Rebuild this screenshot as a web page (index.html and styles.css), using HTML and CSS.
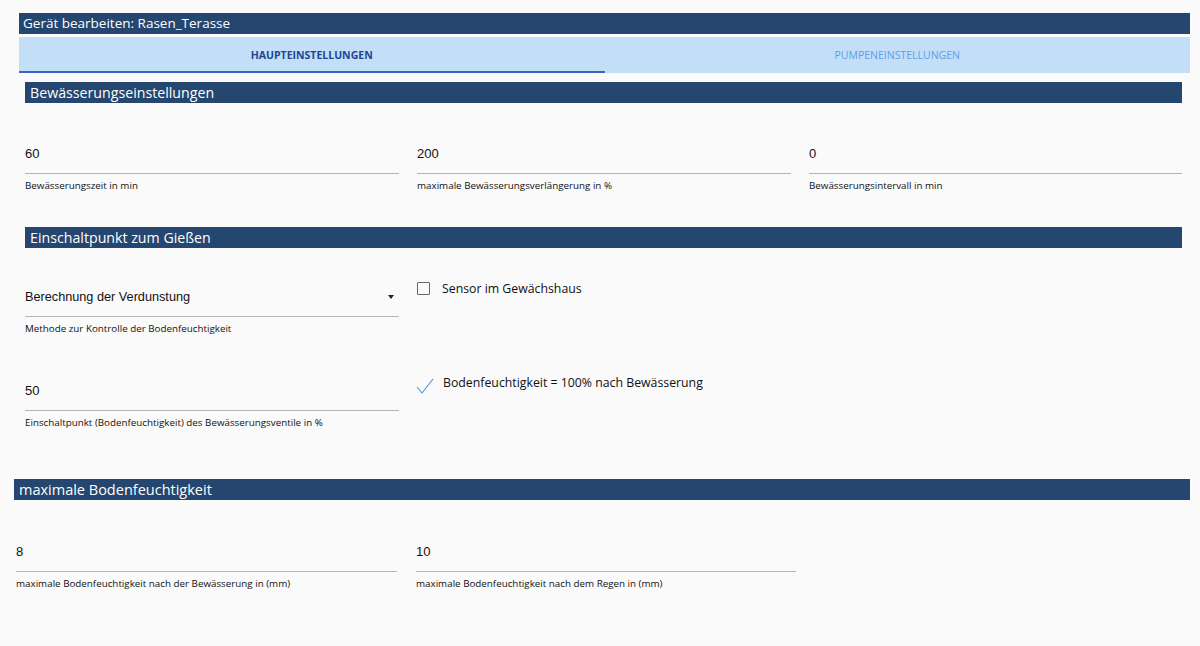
FILE: index.html
```html
<!DOCTYPE html>
<html lang="de">
<head>
  <meta charset="UTF-8">
  <title>Gerät bearbeiten</title>
  <link rel="stylesheet" href="styles.css">
</head>
<body>
  <div class="dialog">
    <div class="dialog-title">Gerät bearbeiten: Rasen_Terasse</div>
    <div class="tabs">
      <div class="tab active">HAUPTEINSTELLUNGEN</div>
      <div class="tab">PUMPENEINSTELLUNGEN</div>
    </div>

    <div class="section">
      <h2 class="section-head">Bewässerungseinstellungen</h2>
      <div class="grid first-row">
        <div class="field">
          <div class="input">60</div>
          <div class="label">Bewässerungszeit in min</div>
        </div>
        <div class="field">
          <div class="input">200</div>
          <div class="label">maximale Bewässerungsverlängerung in %</div>
        </div>
        <div class="field">
          <div class="input">0</div>
          <div class="label">Bewässerungsintervall in min</div>
        </div>
      </div>

      <h2 class="section-head head-gap">Einschaltpunkt zum Gießen</h2>
      <div class="grid first-row tight">
        <div class="field">
          <div class="input select">
            <span>Berechnung der Verdunstung</span>
            <span class="caret"></span>
          </div>
          <div class="label">Methode zur Kontrolle der Bodenfeuchtigkeit</div>
        </div>
        <label class="check">
          <span class="box"></span>
          <span>Sensor im Gewächshaus</span>
        </label>
        <div></div>
        <div class="field second">
          <div class="input">50</div>
          <div class="label">Einschaltpunkt (Bodenfeuchtigkeit) des Bewässerungsventile in %</div>
        </div>
        <label class="check second checked">
          <svg class="tick" width="18" height="16" viewBox="0 0 18 16">
            <path d="M1 9 L6 15 L17 1" fill="none" stroke="#4a90e2" stroke-width="1.1"/>
          </svg>
          <span>Bodenfeuchtigkeit = 100% nach Bewässerung</span>
        </label>
      </div>
    </div>

    <div class="section wide">
      <h2 class="section-head">maximale Bodenfeuchtigkeit</h2>
      <div class="grid two first-row">
        <div class="field">
          <div class="input">8</div>
          <div class="label">maximale Bodenfeuchtigkeit nach der Bewässerung in (mm)</div>
        </div>
        <div class="field">
          <div class="input">10</div>
          <div class="label">maximale Bodenfeuchtigkeit nach dem Regen in (mm)</div>
        </div>
      </div>
    </div>
  </div>
</body>
</html>
```

FILE: styles.css
```css
body {
  margin: 0;
  background: #fafafa;
  color: #111;
  font-family: "Open Sans", "DejaVu Sans", sans-serif;
}
.dialog {
  width: 1171px;
  margin: 13px 0 0 19px;
}
.dialog-title {
  background: #24466f;
  color: #fff;
  height: 21px;
  line-height: 21px;
  padding-left: 4px;
  font-size: 13.5px;
}
.tabs {
  display: flex;
  margin-top: 3px;
  height: 36px;
  background: #c3def7;
}
.tab {
  flex: 1;
  text-align: center;
  line-height: 36px;
  font-size: 10.5px;
  color: #5aa0ea;
  border-bottom: 2px solid transparent;
  box-sizing: border-box;
}
.tab.active {
  color: #1f4592;
  font-weight: bold;
  border-bottom-color: #3a63c4;
}
.section {
  padding: 0 8px 0 6px;
}
.section.wide {
  padding: 0;
  margin-left: -5px;
}
.section-head {
  margin: 9px 0 0;
  background: #24466f;
  color: #fff;
  font-weight: normal;
  font-size: 14.2px;
  height: 21px;
  line-height: 21px;
  padding-left: 5px;
}
.section.wide .section-head {
  margin-top: 50px;
  font-size: 14.5px;
}
.head-gap {
  margin-top: 35px;
}
.grid {
  display: grid;
  grid-template-columns: 374px 374px 373px;
  column-gap: 18px;
  align-items: start;
}
.grid.two {
  grid-template-columns: 381px 380px;
  column-gap: 19px;
  padding-left: 2px;
}
.first-row {
  margin-top: 37px;
}
.first-row.tight {
  margin-top: 35px;
}
.section.wide .first-row {
  margin-top: 38px;
}
.field.second {
  margin-top: 42px;
}
.input {
  font-family: "Liberation Sans", Arial, sans-serif;
  font-size: 13px;
  line-height: 16px;
  height: 16px;
  padding: 6px 0 11px;
  border-bottom: 1px solid #b3b3b3;
}
.select {
  display: flex;
  justify-content: space-between;
  align-items: center;
  font-size: 12.7px;
}
.caret {
  width: 0;
  height: 0;
  margin-right: 5px;
  border-left: 3.5px solid transparent;
  border-right: 3.5px solid transparent;
  border-top: 4px solid #222;
}
.label {
  margin-top: 6px;
  font-size: 9.8px;
  line-height: 12px;
  color: #111;
}
.check {
  display: flex;
  align-items: center;
  gap: 12px;
  font-size: 12.3px;
  height: 14px;
  margin-top: -2px;
}
.box {
  width: 11px;
  height: 11px;
  border: 1.5px solid #666;
  border-radius: 1px;
  flex: none;
}
.check.second {
  margin-top: 40px;
  gap: 9px;
}
.tick {
  margin-top: 8px;
  margin-left: -1px;
  flex: none;
}
```
